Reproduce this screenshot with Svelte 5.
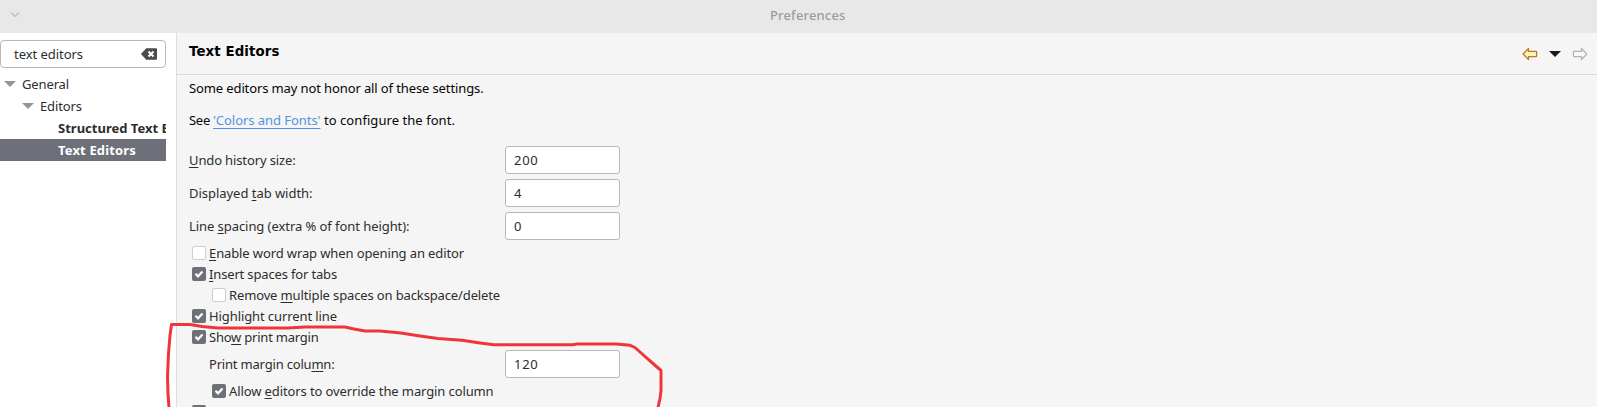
<script>
  function fit(node, width) {
    const count = node.textContent.length;
    const natural = node.getBoundingClientRect().width;
    node.style.letterSpacing = `${(width - natural) / count}px`;
  }
  const fields = [
    { pre: '', key: 'U', post: 'ndo history size:', value: '200', w: 106.5, vw: 24.5 },
    { pre: 'Displayed ', key: 't', post: 'ab width:', value: '4', w: 123.5, vw: 8 },
    { pre: 'Line ', key: 's', post: 'pacing (extra % of font height):', value: '0', w: 220.5, vw: 8 }
  ];
  const options = [
    { pre: '', key: 'E', post: 'nable word wrap when opening an editor', w: 255, on: false },
    { pre: '', key: 'I', post: 'nsert spaces for tabs', w: 128, on: true },
    { pre: 'Remove ', key: 'm', post: 'ultiple spaces on backspace/delete', w: 271, on: false, sub: true },
    { pre: 'Highlight current line', key: '', post: '', w: 128, on: true },
    { pre: 'Sho', key: 'w', post: ' print margin', w: 109.5, on: true }
  ];
  const margin = { pre: 'Print margin colu', key: 'm', post: 'n:', value: '120', w: 125.5, vw: 24.5 };
  const override = { pre: 'Allow ', key: 'e', post: 'ditors to override the margin column', w: 264.5, on: true, sub: true };
  const lines = { pre: 'Show line numbers', key: '', post: '', w: 112, on: true };
</script>

{#snippet label(t)}
  <span class="text" use:fit={t.w}>{t.pre}{#if t.key}<u>{t.key}</u>{/if}{t.post}</span>
{/snippet}

{#snippet field(f, sub)}
  <div class="field" class:indent={sub}>
    <div class="name">{@render label(f)}</div>
    <div class="input"><span class="text" use:fit={f.vw}>{f.value}</span></div>
  </div>
{/snippet}

{#snippet check(o)}
  <div class="option" class:sub={o.sub}>
    <span class="box" class:on={o.on}>
      {#if o.on}<svg width="14" height="14" viewBox="0 0 14 14"><path d="M3.500 6.800 6 9.300 10.500 4.500" fill="none" stroke="#fff" stroke-width="2.200" /></svg>{/if}
    </span>
    {@render label(o)}
  </div>
{/snippet}

<div class="window">
  <header>
    <svg class="chevron" width="12" height="8" viewBox="0 0 12 8"><path d="m2 1.500 4 4 4-4" fill="none" stroke="#b9b9b9" stroke-width="1.200" /></svg>
    <span class="text" use:fit={75.5}>Preferences</span>
  </header>
  <div class="content">
    <aside>
      <div class="search">
        <span class="text" use:fit={69}>text editors</span>
        <svg width="16" height="12" viewBox="0 0 16 12"><path d="M0 6 5.200.3H15q1 0 1 1v9.400q0 1-1 1H5.200z" fill="#4b4b4b" /><path d="m7.500 3.500 5 5m0-5-5 5" stroke="#fff" stroke-width="2" /></svg>
      </div>
      <div class="row"><i class="arrow"></i><span class="text" use:fit={47}>General</span></div>
      <div class="row second"><i class="arrow"></i><span class="text" use:fit={42}>Editors</span></div>
      <div class="row leaf"><span class="text" use:fit={149}>Structured Text Editors</span></div>
      <div class="row leaf selected"><span class="text" use:fit={78}>Text Editors</span></div>
    </aside>
    <main>
      <div class="heading">
        <h1><span use:fit={90.5}>Text Editors</span></h1>
        <div class="nav">
          <svg width="16" height="14" viewBox="0 0 16 14"><path d="M1.200 7 6.500 1.500V4.300H14q.6 0 .6.6v4.200q0 .6-.6.6H6.500v2.800z" fill="#fff3bd" stroke="#b87c19" stroke-width="1.300" stroke-linejoin="round" /></svg>
          <i class="menu"></i>
          <svg width="16" height="14" viewBox="0 0 16 14"><path d="M14.800 7 9.500 1.500V4.300H2q-.6 0-.6.6v4.200q0 .6.6.6h7.500v2.800z" fill="#f8f8f8" stroke="#b2b2b2" stroke-width="1.200" stroke-linejoin="round" /></svg>
        </div>
      </div>
      <div class="page">
        <p><span class="text" use:fit={294.5}>Some editors may not honor all of these settings.</span></p>
        <p class="see"><span class="text" use:fit={24}>{'See '}</span><a href="#fonts" class="text" use:fit={107.5}>'Colors and Fonts'</a><span class="text" use:fit={134.5}>{' to configure the font.'}</span></p>
        <div class="fields">
          {#each fields as f}{@render field(f, false)}{/each}
        </div>
        <div class="options">
          {#each options as o}{@render check(o)}{/each}
        </div>
        {@render field(margin, true)}
        <div class="override">{@render check(override)}</div>
        {@render check(lines)}
      </div>
    </main>
  </div>
  <svg class="ink" width="1597" height="407" viewBox="0 0 1597 407">
    <path transform="translate(0 .5)" d="M169 407 168 393 167.500 376 168.500 353 170 335 171.500 324H190L202 326 218 327.500H288L305 326.500H345L354 328.500 365 330.500H380L401 332.500 420 335.500 438 338 462 339.800 480 342.500 494 344.300H573L577 343.500H616L630 344.800 635 347 645 356 653 363 661 370V390L660 398 658 407" fill="none" stroke="#f0343c" stroke-width="3" stroke-linejoin="round" />
  </svg>
</div>

<style>
  :global(body) { margin: 0; overflow: hidden; }
  .window { position: relative; width: 1597px; height: 407px; overflow: hidden; display: flex; flex-direction: column; background: #f5f5f5; color: #2d2d2d; font: 13px/20px "Noto Sans", "Open Sans", sans-serif; }
  .text { white-space: pre; font-size: 13px; }
  u { text-decoration: underline; text-underline-offset: 2px; text-decoration-thickness: 1px; text-decoration-skip-ink: none; }
  header { height: 33px; flex: none; box-sizing: border-box; display: grid; grid-template-columns: 770px auto; align-items: start; background: #e8e8e8; color: #9b9b9b; font-weight: 500; padding-top: 5px; }
  header .text { justify-self: start; }
  .chevron { margin: 6px 0 0 9px; }
  .content { display: flex; flex: none; height: 374px; overflow: hidden; }
  aside { width: 166px; padding-right: 10px; flex: none; background: #fff; border-right: 1px solid #dedede; }
  .search { box-sizing: border-box; width: 166px; height: 28px; margin: 7px 0 5px; border: 1px solid #b8b8b8; border-radius: 4px; display: flex; align-items: center; justify-content: space-between; padding: 0 8px 0 13px; }
  .row { width: 166px; height: 22px; line-height: 22px; box-sizing: border-box; display: flex; align-items: center; gap: 6px; padding-left: 4px; overflow: hidden; }
  .row.second { padding-left: 22px; }
  .row.leaf { padding-left: 58px; font-weight: 700; }
  .row.selected { background: #6e7079; color: #fff; }
  .arrow { flex: none; border: 6px solid transparent; border-top: 6px solid #959595; border-bottom: 0; }
  main { flex: 1; color: #2d2d2d; }
  .heading { height: 41px; border-bottom: 1px solid #d9d9d9; display: flex; justify-content: space-between; padding: 0 9px 0 12px; }
  h1 { margin: 9px 0 0; font: 700 13.333px/20px "DejaVu Sans", sans-serif; color: #000; }
  .nav { display: flex; align-items: center; gap: 11px; height: 42px; }
  .menu { border: 6px solid transparent; border-top-color: #1b1b1b; border-bottom: 0; }
  .page { padding: 3px 0 0 12px; }
  p { margin: 0 0 12px; height: 20px; color: #050505; display: flex; }
  a { color: #5294e2; text-underline-offset: 3px; text-decoration-skip-ink: none; }
  .fields { display: flex; flex-direction: column; gap: 5px; margin: 16px 0 2px; }
  .see { margin-bottom: 0; }
  .field { display: flex; align-items: center; height: 28px; }
  .name { width: 316px; }
  .field.indent { padding-left: 20px; }
  .indent .name { width: 296px; }
  .input { box-sizing: border-box; width: 115px; height: 28px; border: 1px solid #b8b8b8; border-radius: 3px; background: #fff; padding: 3px 8px; }
  .options { margin-bottom: 3px; }
  .option { height: 21px; display: flex; align-items: center; gap: 3px; padding-left: 3px; }
  .option.sub { padding-left: 23px; }
  .box { box-sizing: border-box; width: 14px; height: 14px; border: 1px solid #cfcfcf; border-radius: 2px; background: #fff; }
  .box.on { border: 0; background: #6e7079; }
  .box svg { display: block; }
  .override { margin-top: 2px; }
  .ink { position: absolute; inset: 0; pointer-events: none; }
</style>
